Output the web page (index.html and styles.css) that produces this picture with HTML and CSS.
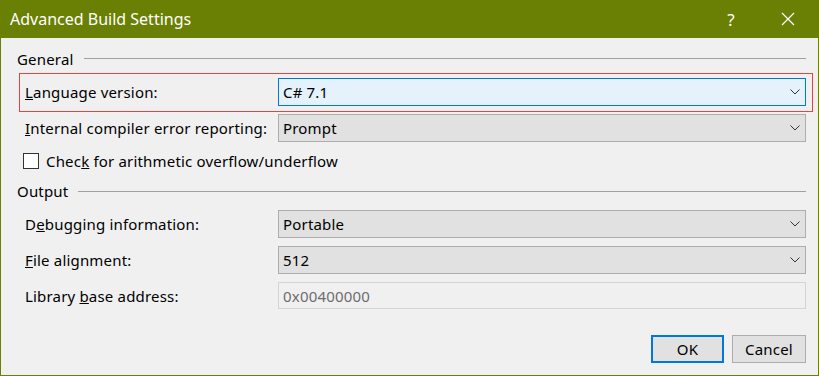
FILE: index.html
```html
<!DOCTYPE html>
<html>
  <head>
    <title>Advanced Build Settings</title>
    <link rel="stylesheet" href="styles.css">
  </head>
  <body>
    <div class="window">
      <div class="titlebar">
        <span class="title">Advanced Build Settings</span>
        <span class="title-btn help">?</span>
        <span class="title-btn close">
          <svg width="14" height="14" viewBox="0 0 14 14">
            <path d="M1 1 L13 13 M13 1 L1 13" stroke="#fff" stroke-width="1.2" fill="none" />
          </svg>
        </span>
      </div>

      <div class="content">
        <div class="group-header">
          <span>General</span>
          <div class="rule"></div>
        </div>

        <div class="row focused">
          <label class="label"><u>L</u>anguage version:</label>
          <div class="combo active">
            <span>C# 7.1</span>
            <svg class="chevron" width="10" height="6" viewBox="0 0 10 6">
              <path d="M0.5 0.5 L5 5 L9.5 0.5" stroke="#333" stroke-width="1" fill="none" />
            </svg>
          </div>
        </div>

        <div class="row">
          <label class="label"><u>I</u>nternal compiler error reporting:</label>
          <div class="combo">
            <span>Prompt</span>
            <svg class="chevron" width="10" height="6" viewBox="0 0 10 6">
              <path d="M0.5 0.5 L5 5 L9.5 0.5" stroke="#333" stroke-width="1" fill="none" />
            </svg>
          </div>
        </div>

        <div class="check-row">
          <span class="checkbox"></span>
          <span>Chec<u>k</u> for arithmetic overflow/underflow</span>
        </div>

        <div class="group-header output">
          <span>Output</span>
          <div class="rule"></div>
        </div>

        <div class="row">
          <label class="label">D<u>e</u>bugging information:</label>
          <div class="combo">
            <span>Portable</span>
            <svg class="chevron" width="10" height="6" viewBox="0 0 10 6">
              <path d="M0.5 0.5 L5 5 L9.5 0.5" stroke="#333" stroke-width="1" fill="none" />
            </svg>
          </div>
        </div>

        <div class="row">
          <label class="label"><u>F</u>ile alignment:</label>
          <div class="combo">
            <span>512</span>
            <svg class="chevron" width="10" height="6" viewBox="0 0 10 6">
              <path d="M0.5 0.5 L5 5 L9.5 0.5" stroke="#333" stroke-width="1" fill="none" />
            </svg>
          </div>
        </div>

        <div class="row">
          <label class="label">Library <u>b</u>ase address:</label>
          <div class="textbox">0x00400000</div>
        </div>

        <div class="buttons">
          <button class="btn default">OK</button>
          <button class="btn cancel">Cancel</button>
        </div>
      </div>
    </div>
  </body>
</html>
```

FILE: styles.css
```css
html,
body {
  margin: 0;
  padding: 0;
}
body {
  font-family: "Noto Sans", "Open Sans", sans-serif;
  font-size: 15px;
  letter-spacing: 0.18px;
  color: #000;
  background: #f0f0f0;
}
.window {
  width: 819px;
  height: 376px;
  display: flex;
  flex-direction: column;
  box-sizing: border-box;
}
.titlebar {
  height: 38px;
  flex: none;
  background: #6a8004;
  color: #fff;
  display: flex;
  align-items: center;
}
.title {
  font-size: 16px;
  letter-spacing: 0;
  margin-left: 10px;
  flex: 1;
}
.title-btn {
  width: 46px;
  height: 38px;
  display: flex;
  align-items: center;
  justify-content: center;
}
.help {
  font-size: 17px;
  margin-right: 11px;
}
.close {
  margin-right: 8px;
}
.content {
  flex: 1;
  border: 1px solid #6a8004;
  border-top: none;
  padding: 11px 12px 0 16px;
  display: flex;
  flex-direction: column;
}
.group-header {
  height: 20px;
  line-height: 20px;
  display: flex;
  align-items: center;
  margin-bottom: 9px;
}
.group-header .rule {
  flex: 1;
  height: 1px;
  background: #a0a0a0;
  margin-left: 10px;
  margin-top: -1px;
}
.group-header.output {
  margin-top: 10px;
}
.group-header.output .rule {
  margin-top: 1px;
}
.row {
  position: relative;
  display: flex;
  align-items: center;
  height: 28px;
  margin-left: 7px;
  margin-bottom: 8px;
}
.row.focused::after {
  content: "";
  position: absolute;
  top: -5px;
  right: -7px;
  bottom: -6px;
  left: -5px;
  border: 1px solid #e84343;
}
.label {
  width: 254px;
  flex: none;
  padding-left: 1px;
  box-sizing: border-box;
}
.combo {
  flex: 1;
  height: 28px;
  box-sizing: border-box;
  border: 1px solid #adadad;
  background: #e1e1e1;
  display: flex;
  align-items: center;
  padding: 0 5px 0 4px;
}
.combo span {
  flex: 1;
}
.combo.active {
  border-color: #0078d7;
  background: #e5f1fb;
}
.chevron {
  flex: none;
}
.textbox {
  flex: 1;
  height: 27px;
  box-sizing: border-box;
  border: 1px solid #d4d4d4;
  background: #f0f0f0;
  color: #6d6d6d;
  display: flex;
  align-items: center;
  padding-left: 4px;
  margin-top: -1px;
}
.check-row {
  display: flex;
  align-items: center;
  height: 20px;
  margin-left: 6px;
  margin-top: 1px;
}
.checkbox {
  width: 16px;
  height: 16px;
  box-sizing: border-box;
  border: 1px solid #333;
  background: #fff;
  margin-right: 7px;
}
.buttons {
  display: flex;
  justify-content: flex-end;
  gap: 8px;
  margin-top: 17px;
}
.btn {
  font-family: inherit;
  font-size: 15px;
  letter-spacing: 0.18px;
  height: 28px;
  background: #e1e1e1;
  border: 1px solid #adadad;
  color: #000;
  padding: 0;
  margin: 0;
}
.btn.default {
  width: 73px;
  border: 2px solid #0078d7;
}
.btn.cancel {
  width: 74px;
}
```
